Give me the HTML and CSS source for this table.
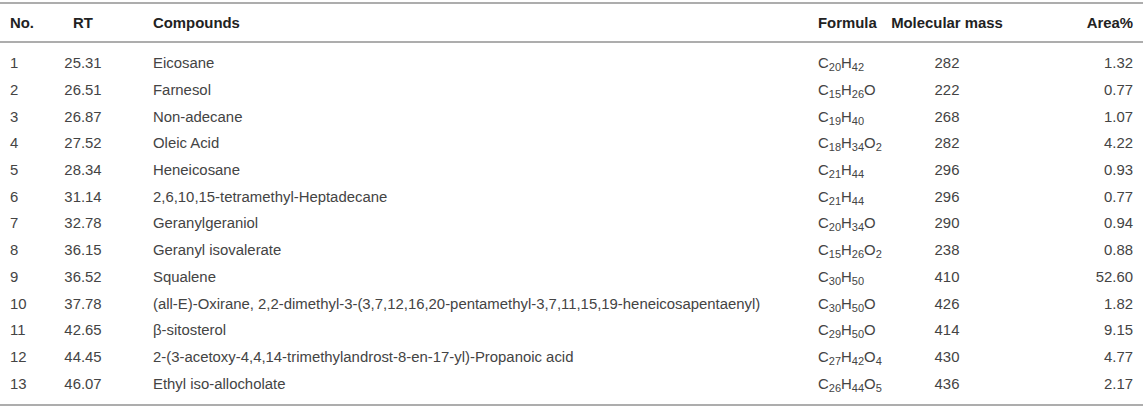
FILE: index.html
```html
<!DOCTYPE html>
<html>
<head>
<meta charset="utf-8">
<link rel="stylesheet" href="styles.css">
</head>
<body>
<table class="tbl">
  <colgroup>
    <col class="c-no"><col class="c-rt"><col class="c-cmp"><col class="c-f"><col class="c-m"><col class="c-a">
  </colgroup>
  <thead>
    <tr>
      <th class="no">No.</th>
      <th class="rt">RT</th>
      <th class="cmp">Compounds</th>
      <th class="f">Formula</th>
      <th class="m">Molecular mass</th>
      <th class="a">Area%</th>
    </tr>
  </thead>
  <tbody>
    <tr><td class="no">1</td><td class="rt">25.31</td><td class="cmp">Eicosane</td><td class="f">C<sub>20</sub>H<sub>42</sub></td><td class="m">282</td><td class="a">1.32</td></tr>
    <tr><td class="no">2</td><td class="rt">26.51</td><td class="cmp">Farnesol</td><td class="f">C<sub>15</sub>H<sub>26</sub>O</td><td class="m">222</td><td class="a">0.77</td></tr>
    <tr><td class="no">3</td><td class="rt">26.87</td><td class="cmp">Non-adecane</td><td class="f">C<sub>19</sub>H<sub>40</sub></td><td class="m">268</td><td class="a">1.07</td></tr>
    <tr><td class="no">4</td><td class="rt">27.52</td><td class="cmp">Oleic Acid</td><td class="f">C<sub>18</sub>H<sub>34</sub>O<sub>2</sub></td><td class="m">282</td><td class="a">4.22</td></tr>
    <tr><td class="no">5</td><td class="rt">28.34</td><td class="cmp">Heneicosane</td><td class="f">C<sub>21</sub>H<sub>44</sub></td><td class="m">296</td><td class="a">0.93</td></tr>
    <tr><td class="no">6</td><td class="rt">31.14</td><td class="cmp">2,6,10,15-tetramethyl-Heptadecane</td><td class="f">C<sub>21</sub>H<sub>44</sub></td><td class="m">296</td><td class="a">0.77</td></tr>
    <tr><td class="no">7</td><td class="rt">32.78</td><td class="cmp">Geranylgeraniol</td><td class="f">C<sub>20</sub>H<sub>34</sub>O</td><td class="m">290</td><td class="a">0.94</td></tr>
    <tr><td class="no">8</td><td class="rt">36.15</td><td class="cmp">Geranyl isovalerate</td><td class="f">C<sub>15</sub>H<sub>26</sub>O<sub>2</sub></td><td class="m">238</td><td class="a">0.88</td></tr>
    <tr><td class="no">9</td><td class="rt">36.52</td><td class="cmp">Squalene</td><td class="f">C<sub>30</sub>H<sub>50</sub></td><td class="m">410</td><td class="a">52.60</td></tr>
    <tr><td class="no">10</td><td class="rt">37.78</td><td class="cmp">(all-E)-Oxirane, 2,2-dimethyl-3-(3,7,12,16,20-pentamethyl-3,7,11,15,19-heneicosapentaenyl)</td><td class="f">C<sub>30</sub>H<sub>50</sub>O</td><td class="m">426</td><td class="a">1.82</td></tr>
    <tr><td class="no">11</td><td class="rt">42.65</td><td class="cmp">β-sitosterol</td><td class="f">C<sub>29</sub>H<sub>50</sub>O</td><td class="m">414</td><td class="a">9.15</td></tr>
    <tr><td class="no">12</td><td class="rt">44.45</td><td class="cmp">2-(3-acetoxy-4,4,14-trimethylandrost-8-en-17-yl)-Propanoic acid</td><td class="f">C<sub>27</sub>H<sub>42</sub>O<sub>4</sub></td><td class="m">430</td><td class="a">4.77</td></tr>
    <tr><td class="no">13</td><td class="rt">46.07</td><td class="cmp">Ethyl iso-allocholate</td><td class="f">C<sub>26</sub>H<sub>44</sub>O<sub>5</sub></td><td class="m">436</td><td class="a">2.17</td></tr>
  </tbody>
</table>
</body>
</html>
```

FILE: styles.css
```css
html, body {
  margin: 0;
  padding: 0;
  background: #ffffff;
}
body {
  padding-top: 2px;
  font-family: "Liberation Sans", Arial, Helvetica, sans-serif;
  font-size: 14.9px;
  color: #444444;
}
.tbl {
  width: 1143px;
  border-collapse: collapse;
  table-layout: fixed;
  border-top: 2px solid #adadad;
  border-bottom: 2px solid #adadad;
}
.c-no { width: 45px; }
.c-rt { width: 76px; }
.c-cmp { width: 687px; }
.c-f { width: 74px; }
.c-m { width: 130px; }
.c-a { width: 131px; }

.tbl th {
  height: 37px;
  padding: 0;
  font-weight: bold;
  color: #222222;
  border-bottom: 2px solid #adadad;
  vertical-align: middle;
  white-space: nowrap;
}
.tbl td {
  height: 26.7px;
  padding: 0;
  vertical-align: middle;
  white-space: nowrap;
}
.tbl tbody tr:first-child td {
  padding-top: 7px;
}
.tbl tbody tr:last-child td {
  padding-bottom: 7px;
}
.no { text-align: left; padding-left: 10px !important; }
.rt { text-align: center; }
.cmp { text-align: left; padding-left: 32px !important; }
.f { text-align: left; padding-left: 10px !important; }
.m { text-align: center; }
.a { text-align: right; padding-right: 10px !important; }

sub {
  font-size: 11px;
  vertical-align: -3px;
  line-height: 0;
}
```
